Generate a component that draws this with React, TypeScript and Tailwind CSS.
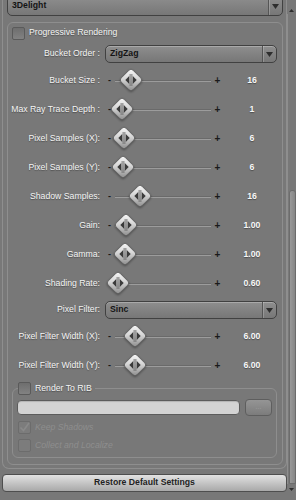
import React from "react";

const FONT = { fontFamily: '"Liberation Sans", Arial, sans-serif' };

function Thumb() {
  return (
    <svg width="24" height="24" viewBox="0 0 22 22">
      <defs>
        <linearGradient id="thg" x1="0" y1="0" x2="0" y2="1">
          <stop offset="0" stopColor="#f6f6f6" />
          <stop offset="0.45" stopColor="#d6d6d6" />
          <stop offset="1" stopColor="#8e8e8e" />
        </linearGradient>
      </defs>
      <path
        d="M11 1.2 Q12 1.2 13 2.2 L19.8 9 Q20.8 10 20.8 11 Q20.8 12 19.8 13 L13 19.8 Q12 20.8 11 20.8 Q10 20.8 9 19.8 L2.2 13 Q1.2 12 1.2 11 Q1.2 10 2.2 9 L9 2.2 Q10 1.2 11 1.2Z"
        fill="url(#thg)"
        stroke="#5c5c5c"
        strokeWidth="0.8"
      />
      <path d="M9.4 7.4 L5.8 11 L9.4 14.6Z" fill="#3a3a3a" />
      <path d="M12.6 7.4 L16.2 11 L12.6 14.6Z" fill="#3a3a3a" />
      <line x1="10.2" y1="5.5" x2="10.2" y2="16.5" stroke="#6a6a6a" strokeWidth="0.8" />
      <line x1="11.8" y1="5.5" x2="11.8" y2="16.5" stroke="#6a6a6a" strokeWidth="0.8" />
    </svg>
  );
}

function Arrow() {
  return (
    <svg width="7" height="5" viewBox="0 0 7 5">
      <path d="M0 0 L7 0 L3.5 5Z" fill="#2e2e2e" />
    </svg>
  );
}

function Dropdown({ text, className }: { text: string; className: string }) {
  return (
    <div
      className={
        "flex items-stretch rounded-[5px] border border-[#414141] bg-gradient-to-b from-[#8e8e8e] to-[#777777] shadow-[inset_0_1px_0_rgba(255,255,255,0.25)] " +
        className
      }
    >
      <div className="flex flex-1 items-center pl-[4px] text-[8.7px] font-bold text-[#141414]">{text}</div>
      <div className="flex w-[14px] items-center justify-center border-l border-[#555] shadow-[inset_1px_0_0_rgba(255,255,255,0.2)]">
        <Arrow />
      </div>
    </div>
  );
}

function Check({ checked, disabled }: { checked?: boolean; disabled?: boolean }) {
  return (
    <div
      className={
        "relative flex h-[13px] w-[13px] shrink-0 items-center justify-center rounded-[2px] border " +
        (disabled
          ? "border-[#6c6c6c] bg-[#7c7c7c]"
          : "border-[#5a5a5a] bg-gradient-to-b from-[#6e6e6e] to-[#828282]")
      }
    >
      {checked && (
        <svg width="11" height="11" viewBox="0 0 11 11">
          <path d="M1.5 5.5 L4.5 8.5 L10 1" fill="none" stroke="#8a8a8a" strokeWidth="1.6" />
        </svg>
      )}
    </div>
  );
}

const labelCls =
  "w-[92px] shrink-0 text-right text-[8.7px] text-[#f4f4f4] [text-shadow:0_1px_1px_rgba(0,0,0,0.35)] whitespace-nowrap";

function SliderRow({ label, value, c }: { label: string; value: string; c: number }) {
  return (
    <div className="flex h-[29px] items-center">
      <div className={labelCls}>{label}</div>
      <div className="relative ml-[6px] flex h-full w-[116px] items-center">
        <div className="w-[7px] text-center text-[9px] font-bold leading-none text-[#1a1a1a]">-</div>
        <div className="mx-[2px] h-[2px] flex-1 border-t border-b border-t-[#6a6a6a] border-b-[#9c9c9c]" />
        <div className="w-[9px] text-center text-[10px] font-bold leading-none text-[#1a1a1a]">+</div>
        <div
          className="absolute top-[2px] drop-shadow-[0_1px_1px_rgba(0,0,0,0.35)]"
          style={{ left: c - 12 - 106 }}
        >
          <Thumb />
        </div>
      </div>
      <div className="ml-[15px] w-[30px] text-center text-[8.7px] font-bold text-[#f8f8f8] [text-shadow:0_1px_1px_rgba(0,0,0,0.35)]">
        {value}
      </div>
    </div>
  );
}

export default function App() {
  const rows = [
    { label: "Bucket Size :", value: "16", c: 131 },
    { label: "Max Ray Trace Depth :", value: "1", c: 122 },
    { label: "Pixel Samples (X):", value: "6", c: 124 },
    { label: "Pixel Samples (Y):", value: "6", c: 123 },
    { label: "Shadow Samples:", value: "16", c: 140 },
    { label: "Gain:", value: "1.00", c: 126 },
    { label: "Gamma:", value: "1.00", c: 125 },
    { label: "Shading Rate:", value: "0.60", c: 118 },
  ];
  return (
    <div className="flex h-[500px] w-[296px] overflow-hidden bg-[#787878]" style={FONT}>
      <div className="flex w-[287px] flex-col">
        <div className="ml-[2px] flex h-[469px] w-[285px] flex-col rounded-b-[7px] border-x border-b border-[#8e8e8e] px-[4px] pb-[3px]">
          <Dropdown text="3Delight" className="-mt-[4px] h-[20px] w-[276px]" />
          <div className="mt-[6px] flex w-[276px] flex-1 flex-col rounded-[6px] border border-[#8e8e8e] pt-[3px]">
            <div className="flex h-[14px] items-center pl-[4px]">
              <Check />
              <span className="ml-[4px] text-[8.7px] text-[#f4f4f4] [text-shadow:0_1px_1px_rgba(0,0,0,0.35)]">
                Progressive Rendering
              </span>
            </div>
            <div className="mt-[5px] flex h-[18px] items-center">
              <div className={labelCls}>Bucket Order :</div>
              <Dropdown text="ZigZag" className="ml-[5px] h-[18px] w-[172px]" />
            </div>
            <div className="mt-[3px] flex flex-col">
              {rows.map((r) => (
                <SliderRow key={r.label} {...r} />
              ))}
            </div>
            <div className="mt-[3px] flex h-[18px] items-center">
              <div className={labelCls}>Pixel Filter:</div>
              <Dropdown text="Sinc" className="ml-[5px] h-[18px] w-[172px]" />
            </div>
            <div className="mt-[3px] flex flex-col">
              <SliderRow label="Pixel Filter Width (X):" value="6.00" c={135} />
              <SliderRow label="Pixel Filter Width (Y):" value="6.00" c={135} />
            </div>
            <fieldset className="mt-[2px] ml-[4px] mr-[5px] rounded-[6px] border border-[#8e8e8e] px-0 pb-[3px]">
              <legend className="ml-[5px] flex items-center pr-[3px]">
                <Check />
                <span className="ml-[4px] text-[8.7px] text-[#f4f4f4] [text-shadow:0_1px_1px_rgba(0,0,0,0.35)]">
                  Render To RIB
                </span>
              </legend>
              <div className="mt-[4px] flex items-start pl-[4px]">
                <div className="mt-[1px] h-[15px] w-[223px] rounded-[4px] border border-[#5c5c5c] bg-[#d3d3d3] shadow-[inset_0_1px_1px_rgba(0,0,0,0.15)]" />
                <div className="ml-[5px] flex h-[17px] w-[27px] items-center justify-center rounded-[4px] border border-[#5e5e5e] bg-gradient-to-b from-[#959595] to-[#7c7c7c] text-[7px] text-[#a0a0a0]">
                  ...
                </div>
              </div>
              <div className="mt-[2px] flex h-[18px] items-center pl-[5px]">
                <Check checked disabled />
                <span className="ml-[4px] text-[8.7px] italic text-[#8e8e8e]">Keep Shadows</span>
              </div>
              <div className="flex h-[18px] items-center pl-[5px]">
                <Check disabled />
                <span className="ml-[4px] text-[8.7px] italic text-[#8e8e8e]">Collect and Localize</span>
              </div>
            </fieldset>
          </div>
        </div>
        <div className="ml-[2px] mt-[5px] flex h-[18px] w-[285px] items-center justify-center rounded-[4px] border border-[#4e4e4e] bg-gradient-to-b from-[#e2e2e2] to-[#a9a9a9] text-[8.7px] font-bold text-[#222]">
          Restore Default Settings
        </div>
      </div>
      <div className="flex w-[9px] flex-col">
        <div className="flex h-[14px] items-end justify-center pb-[2px]">
          <svg width="5" height="3" viewBox="0 0 5 3">
            <path d="M0 3 L5 3 L2.5 0Z" fill="#2e2e2e" />
          </svg>
        </div>
        <div className="flex flex-1 flex-col border-l border-[#8e8e8e] pl-[1px]">
          <div className="mt-[176px] flex-1 rounded-t-[3px] border border-[#6c6c6c] bg-gradient-to-r from-[#9a9a9a] to-[#868686]" />
        </div>
        <div className="flex h-[16px] items-start justify-center pt-[4px]">
          <svg width="5" height="3" viewBox="0 0 5 3">
            <path d="M0 0 L5 0 L2.5 3Z" fill="#2e2e2e" />
          </svg>
        </div>
      </div>
    </div>
  );
}
